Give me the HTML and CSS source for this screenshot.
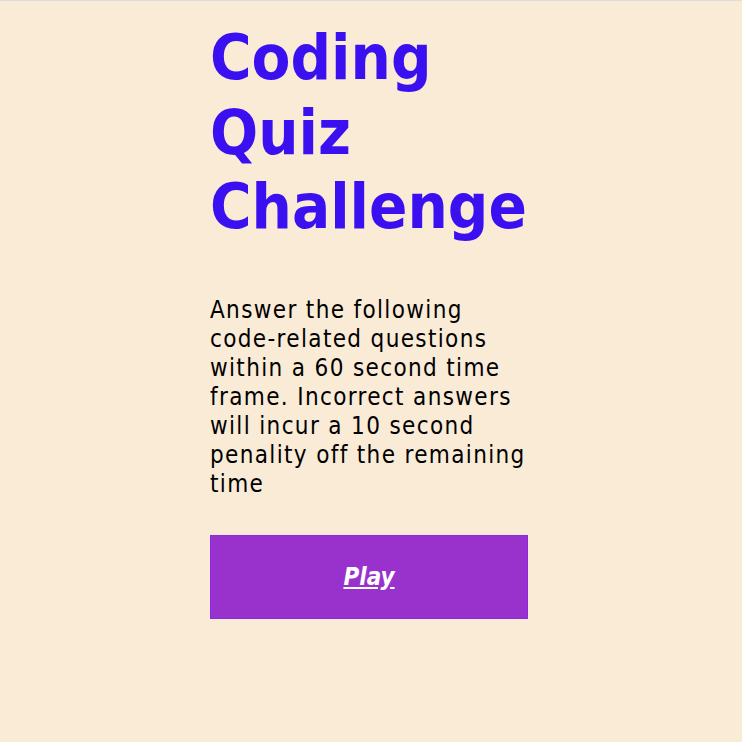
FILE: index.html
```html
<!DOCTYPE html>
<html lang="en">
<head>
<meta charset="utf-8">
<title>Coding Quiz Challenge</title>
<link rel="stylesheet" href="styles.css">
</head>
<body>
<main class="quiz">
  <h1 class="quiz-title">Coding Quiz Challenge</h1>
  <p class="quiz-intro">Answer the following code-related questions within a 60 second time frame. Incorrect answers will incur a 10 second penality off the remaining time</p>
  <button class="play-btn" type="button"><span class="play-label">Play</span></button>
</main>
</body>
</html>
```
FILE: styles.css
```css
html, body {
  margin: 0;
  padding: 0;
}
body {
  background: #faebd7;
  border-top: 1px solid #dcdcdc;
  min-height: 741px;
  font-family: "DejaVu Sans", Verdana, sans-serif;
  font-stretch: condensed;
}
.quiz {
  width: 318px;
  margin-left: 210px;
  padding-top: 20px;
  display: flex;
  flex-direction: column;
}
.quiz-title {
  margin: 0;
  font-size: 63px;
  font-weight: bold;
  line-height: 74.5px;
  color: #3a0ff0;
}
.quiz-intro {
  margin: 51px 0 0;
  font-size: 24px;
  line-height: 29px;
  letter-spacing: 1.35px;
  color: #000;
}
.play-btn {
  margin-top: 36px;
  height: 84px;
  width: 318px;
  background: #9932cc;
  border: 1px solid #8a2be2;
  color: #fff;
  font-family: "DejaVu Sans", Verdana, sans-serif;
  font-stretch: condensed;
  font-size: 24px;
  font-weight: bold;
  font-style: italic;
  cursor: pointer;
}
.play-label {
  text-decoration: underline;
}
```
